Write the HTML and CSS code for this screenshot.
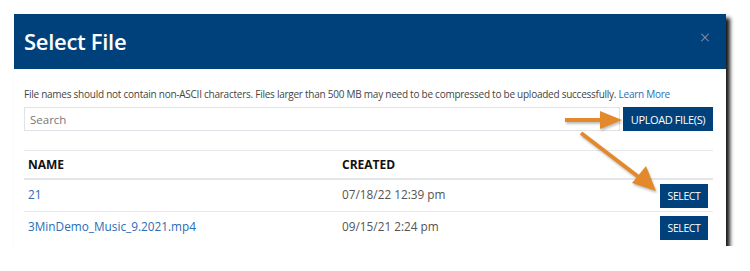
FILE: index.html
```html
<!DOCTYPE html>
<html lang="en">
<head>
    <meta charset="UTF-8">
    <title>Select File</title>
    <link rel="stylesheet" href="styles.css">
</head>
<body>
    <div class="dialog">
        <div class="dialog-header">
            <h1>Select File</h1>
            <span class="close">&times;</span>
        </div>

        <div class="dialog-body">
            <p class="note">
                File names should not contain non-ASCII characters. Files larger than 500 MB may need to be compressed to be uploaded successfully.
                <a href="#">Learn More</a>
            </p>

            <div class="search-row">
                <input class="search" type="text" placeholder="Search">
                <button class="btn btn-upload">UPLOAD FILE(S)</button>
            </div>

            <table class="files">
                <thead>
                    <tr>
                        <th class="col-name">NAME</th>
                        <th class="col-created">CREATED</th>
                        <th></th>
                    </tr>
                </thead>
                <tbody>
                    <tr>
                        <td><a href="#">21</a></td>
                        <td>07/18/22 12:39 pm</td>
                        <td class="col-action"><button class="btn btn-select">SELECT</button></td>
                    </tr>
                    <tr>
                        <td><a href="#">3MinDemo_Music_9.2021.mp4</a></td>
                        <td>09/15/21 2:24 pm</td>
                        <td class="col-action"><button class="btn btn-select">SELECT</button></td>
                    </tr>
                </tbody>
            </table>
        </div>

        <!-- callout arrows -->
        <svg class="arrows" width="750" height="271" viewBox="0 0 750 271">
            <g fill="#e4892b" stroke="#e4892b">
                <line x1="565" y1="120" x2="604" y2="120" stroke-width="4"/>
                <polygon points="600,111 622,120 600,129" stroke="none"/>
                <line x1="581" y1="133" x2="640" y2="178" stroke-width="4"/>
                <polygon points="632,183 646,166 656,191" stroke="none"/>
            </g>
        </svg>
    </div>
</body>
</html>
```

FILE: styles.css
```css
body {
    margin: 0;
    background: #ffffff;
    font-family: "Open Sans", "Noto Sans", sans-serif;
    color: #333;
}

.dialog {
    position: relative;
    width: 712px;
    height: 232px;
    margin: 14px 0 0 14px;
    background: #fff;
    box-shadow: 4px 4px 4px rgba(0, 0, 0, 0.9);
}

.dialog-header {
    height: 55px;
    background: #00417b;
    display: flex;
    align-items: center;
    justify-content: space-between;
    padding: 0 16px 0 10px;
}

.dialog-header h1 {
    margin: 0;
    color: #fff;
    font-size: 22px;
    font-weight: 600;
    letter-spacing: -0.3px;
    padding-bottom: 2px;
}

.close {
    color: #8ba5c4;
    font-size: 18px;
    font-weight: 300;
    line-height: 1;
    margin-bottom: 9px;
}

.dialog-body {
    padding: 17px 13px 0 10px;
}

.note {
    margin: 0;
    font-size: 10px;
    letter-spacing: -0.25px;
    line-height: 16px;
    color: #444;
    white-space: nowrap;
}

.note a {
    color: #2a6db5;
    text-decoration: none;
}

.search-row {
    display: flex;
    gap: 3px;
    margin-top: 5px;
    height: 24px;
}

.search {
    flex: 1;
    border: 1px solid #dfe3e7;
    padding: 0 5px;
    font-family: inherit;
    font-size: 11.5px;
    color: #333;
    outline: none;
}

.search::placeholder {
    color: #777;
}

.btn {
    background: #00417b;
    color: #fff;
    border: none;
    font-family: inherit;
    cursor: pointer;
    padding: 0;
}

.btn-upload {
    width: 90px;
    font-size: 11px;
    letter-spacing: -0.4px;
}

.files {
    width: 100%;
    border-collapse: collapse;
    margin-top: 19px;
    font-size: 11.8px;
}

.files th {
    text-align: left;
    font-size: 12px;
    font-weight: 700;
    color: #111;
    height: 27px;
    padding: 0 0 0 4px;
    border-top: 1px solid #e6e8ea;
    border-bottom: 2px solid #e3e6e9;
}

.files td {
    height: 27px;
    padding: 0 0 4px 4px;
    color: #555;
    border-bottom: 1px solid #e6e8ea;
}

.files tbody tr:last-child td {
    border-bottom: none;
}

.files a {
    color: #2a6db5;
    text-decoration: none;
}

.col-name {
    width: 310px;
}

.files .col-action {
    text-align: right;
    padding: 0 5px 0 0;
}

.btn-select {
    width: 48px;
    height: 24px;
    font-size: 10.5px;
    letter-spacing: -0.4px;
    vertical-align: middle;
}

.arrows {
    position: absolute;
    left: -14px;
    top: -14px;
    pointer-events: none;
    filter: drop-shadow(1px 2px 1px rgba(0, 0, 0, 0.25));
}
```
